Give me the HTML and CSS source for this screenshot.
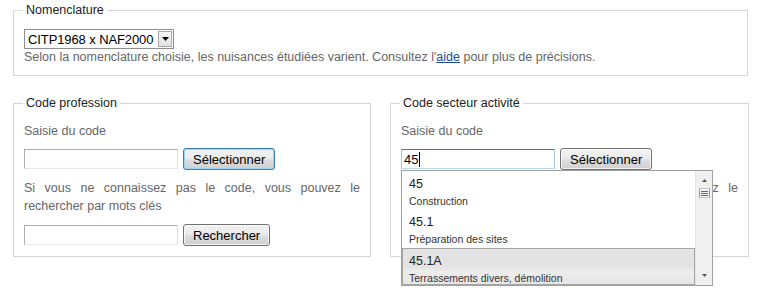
FILE: index.html
```html
<!DOCTYPE html>
<html lang="fr">
<head>
<meta charset="utf-8">
<title>Nomenclature</title>
<link rel="stylesheet" href="styles.css">
</head>
<body>
<div class="page">
  <section class="box box-top">
    <h2 class="legend">Nomenclature</h2>
    <div class="select">
      <span class="select-value">CITP1968 x NAF2000</span>
      <span class="select-arrow"><svg width="7" height="4" viewBox="0 0 7 4"><path d="M0 0H7L3.5 4Z" fill="#000"/></svg></span>
    </div>
    <p class="hint">Selon la nomenclature choisie, les nuisances étudiées varient. Consultez l'<a class="link" href="#">aide</a> pour plus de précisions.</p>
  </section>

  <div class="cols">
    <section class="box">
      <h2 class="legend">Code profession</h2>
      <p class="label">Saisie du code</p>
      <div class="row">
        <input class="field" type="text">
        <button class="btn btn-default" type="button">Sélectionner</button>
      </div>
      <p class="text">Si vous ne connaissez pas le code, vous pouvez le rechercher par mots clés</p>
      <div class="row">
        <input class="field" type="text">
        <button class="btn" type="button">Rechercher</button>
      </div>
    </section>

    <section class="box">
      <h2 class="legend">Code secteur activité</h2>
      <p class="label">Saisie du code</p>
      <div class="row row-ac">
        <div class="field field-focus"><span class="field-value">45</span><span class="caret"></span></div>
        <button class="btn" type="button">Sélectionner</button>
        <div class="ac">
          <ul class="ac-list">
            <li class="ac-item"><span class="ac-code">45</span><span class="ac-desc">Construction</span></li>
            <li class="ac-item"><span class="ac-code">45.1</span><span class="ac-desc">Préparation des sites</span></li>
            <li class="ac-item ac-active"><span class="ac-code">45.1A</span><span class="ac-desc">Terrassements divers, démolition</span></li>
          </ul>
          <div class="sb">
            <svg class="sb-up" width="5" height="3" viewBox="0 0 5 3"><path d="M0 3H5L2.5 0Z" fill="#555"/></svg>
            <div class="sb-thumb"><span></span><span></span><span></span></div>
            <svg class="sb-down" width="5" height="3" viewBox="0 0 5 3"><path d="M0 0H5L2.5 3Z" fill="#555"/></svg>
          </div>
        </div>
      </div>
      <p class="text">Si vous ne connaissez pas le code, vous pouvez le rechercher par mots clés</p>
      <div class="row">
        <input class="field" type="text">
        <button class="btn" type="button">Rechercher</button>
      </div>
    </section>
  </div>
</div>
</body>
</html>
```

FILE: styles.css
```css
* { box-sizing: border-box; }
html, body { margin: 0; padding: 0; background: #fff; }
body {
  font-family: "Liberation Sans", Arial, sans-serif;
  font-size: 12.5px;
  color: #666;
  min-height: 292px;
}
.page {
  width: 775px;
  min-height: 292px;
  padding: 10px 0 0 13px;
}
.box {
  border: 1px solid #d6d6d6;
  padding: 0 10px 10px;
  background: #fff;
}
.box-top { width: 735px; }
.legend {
  display: block;
  width: fit-content;
  margin: -8px 0 0 -1px;
  padding: 0 3px;
  font-size: 12.5px;
  font-weight: normal;
  line-height: 15px;
  color: #222;
  background: #fff;
}
.select {
  display: flex;
  align-items: center;
  width: 150px;
  height: 20px;
  margin-top: 11px;
  border: 1px solid #8e8f8f;
  background: #fff;
  padding: 1px;
}
.select-value {
  flex: 1;
  padding-left: 2px;
  font-size: 13px;
  letter-spacing: -0.1px;
  color: #000;
  white-space: nowrap;
  overflow: hidden;
}
.select-arrow {
  flex: none;
  width: 14px;
  height: 16px;
  margin-left: 1px;
  display: flex;
  align-items: center;
  justify-content: center;
  border: 1px solid #a7a7a7;
  background: linear-gradient(#f6f6f6, #e2e2e2);
}
.hint {
  margin: 0;
  line-height: 16px;
}
.link { color: #1c4d8c; text-decoration: underline; }

.cols {
  display: grid;
  grid-template-columns: 358px 359px;
  column-gap: 19px;
  margin-top: 27px;
}
.label {
  margin: 12px 0 0;
  line-height: 16px;
}
.row {
  display: flex;
  align-items: center;
  gap: 5px;
  height: 22px;
  margin-top: 9px;
}
.row-ac { position: relative; }
.field {
  width: 154px;
  height: 20px;
  margin: 0;
  padding: 0 2px;
  border: 1px solid #abadb3;
  border-right-color: #dbdfe6;
  border-bottom-color: #e3e9ef;
  font: 13px "Liberation Sans", Arial, sans-serif;
  background: #fff;
}
.field-focus {
  display: flex;
  align-items: center;
  border-color: #3d7bad #a4c9e3 #b7d9ed #a4c9e3;
  color: #000;
}
.caret {
  width: 1px;
  height: 15px;
  background: #000;
  margin-left: 1px;
}
.btn {
  height: 22px;
  margin: 0;
  padding: 0 9px;
  border: 1px solid #707070;
  border-radius: 3px;
  font: 13px "Liberation Sans", Arial, sans-serif;
  color: #000;
  background: linear-gradient(#f2f2f2 0%, #ebebeb 45%, #dddddd 55%, #cfcfcf 100%);
  box-shadow: inset 0 0 0 1px rgba(255,255,255,0.7);
}
.btn-default {
  border-color: #3c7fb1;
  box-shadow: inset 0 0 0 1px #9cd3f4;
}
.text {
  margin: 9px 0 0;
  line-height: 18px;
  text-align: justify;
}

.ac {
  position: absolute;
  left: 0;
  top: 22px;
  width: 312px;
  height: 116px;
  z-index: 10;
  display: flex;
  border: 1px solid #a0a0a0;
  background: #fff;
}
.ac-list {
  list-style: none;
  margin: 0;
  padding: 0;
  flex: 1;
  overflow: hidden;
}
.ac-item {
  height: 38px;
  padding: 4px 0 0 7px;
  display: flex;
  flex-direction: column;
}
.ac-code {
  font-size: 12.5px;
  line-height: 18px;
  color: #222;
}
.ac-desc {
  font-size: 10.5px;
  line-height: 16px;
  color: #333;
}
.ac-active {
  margin-top: 1px;
  height: 37px;
  padding: 3px 0 0 6px;
  border: 1px solid #a6a6a6;
  background: linear-gradient(#e3e3e3 0%, #e3e3e3 50%, #ededed 65%, #e6e6e6 100%);
}
.sb {
  width: 17px;
  flex: none;
  display: flex;
  flex-direction: column;
  align-items: center;
  background: #f0f0f0;
  border-left: 1px solid #e4e4e4;
  padding-top: 8px;
}
.sb-up { display: block; }
.sb-thumb {
  margin-top: 6px;
  width: 11px;
  height: 10px;
  border: 1px solid #9a9a9a;
  border-top-color: #c8c8c8;
  border-bottom-color: #c8c8c8;
  display: flex;
  flex-direction: column;
  justify-content: center;
  align-items: center;
  gap: 1px;
  background: #f4f4f4;
}
.sb-thumb span {
  width: 7px;
  height: 1px;
  background: #6a6a6a;
}
.sb-down { display: block; margin-top: auto; margin-bottom: 8px; }
```
